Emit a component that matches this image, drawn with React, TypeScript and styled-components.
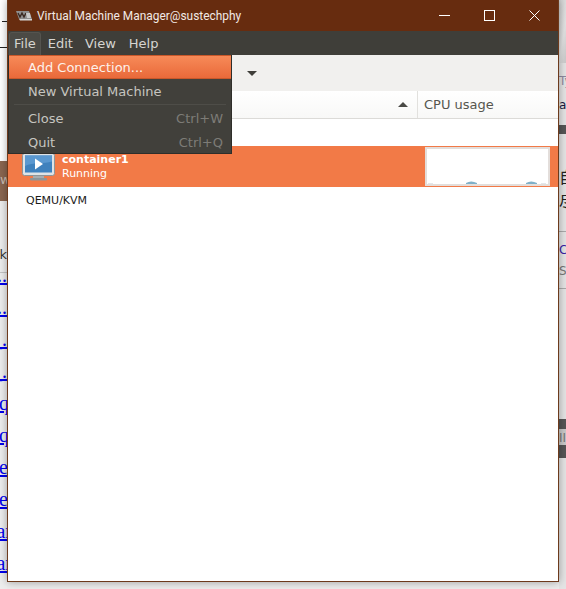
import styled, { createGlobalStyle } from "styled-components";
import { FC } from "react";

const GlobalStyle = createGlobalStyle`
  html, body {
    margin: 0;
    padding: 0;
    background: #ececec;
  }
  * {
    box-sizing: border-box;
  }
`;

const ui = `"DejaVu Sans", sans-serif`;
const pageLinks = [
  { text: "a..", over: 0 },
  { text: "b..", over: 0 },
  { text: "c_.", over: 0 },
  { text: "d_.", over: 0 },
  { text: "xq", over: 2 },
  { text: "xq", over: 2 },
  { text: "xe", over: 1 },
  { text: "xe", over: 1 },
  { text: "xar", over: 5 },
  { text: "xar", over: 5 },
];

const WindowIcon: FC = () => (
  <svg width="16" height="11" viewBox="0 0 16 11">
    <path d="M0 1h13l3 8H3z" fill="#8f8f8f" />
    <path d="M2 3l2 4 2-4 2 4 2-4" fill="none" stroke="#3b2a22" strokeWidth="1.4" />
    <path d="M10 3h4l1 5h-4z" fill="#c9c9c9" />
    <path d="M3 9h13v1.5H4z" fill="#d5d5d5" />
  </svg>
);

const VmIcon: FC = () => (
  <svg width="33" height="28" viewBox="0 0 33 28">
    <rect x="0.5" y="0.5" width="32" height="22" rx="2" fill="#dfe3e6" stroke="#8d9599" />
    <rect x="3" y="2.5" width="27" height="17" fill="#3f81bd" />
    <path d="M3 2.5h27v6C22 11 11 9 3 13z" fill="#5a98d0" />
    <path d="M13 5.5l8 5.5-8 5.5z" fill="#fff" />
    <rect x="11" y="23" width="11" height="2" fill="#a7adb0" />
    <rect x="8" y="25" width="17" height="2.5" rx="1" fill="#8d9599" />
  </svg>
);

const App: FC = () => (
  <>
    <GlobalStyle />
    <Desktop>
      <LeftStrip>
        <Dash $top={21} $width={5} />
        <Dash $top={25} $width={7} />
        <BrownBand>w</BrownBand>
        <FadedText>ak</FadedText>
        <HairLine />
        <LinkList>
          {pageLinks.map((link, i) => (
            <LinkRow key={i}>
              <PageLink $over={link.over}>{link.text}</PageLink>
            </LinkRow>
          ))}
        </LinkList>
      </LeftStrip>

      <Window>
        <TitleBar>
          <WindowIcon />
          <TitleText>Virtual Machine Manager@sustechphy</TitleText>
          <WindowControls>
            <svg width="11" height="11" viewBox="0 0 11 11">
              <path d="M0 5.5h11" stroke="#fff" />
            </svg>
            <svg width="11" height="11" viewBox="0 0 11 11">
              <rect x="0.5" y="0.5" width="10" height="10" fill="none" stroke="#fff" />
            </svg>
            <svg width="11" height="11" viewBox="0 0 11 11">
              <path d="M0.5 0.5l10 10M10.5 0.5l-10 10" stroke="#fff" />
            </svg>
          </WindowControls>
        </TitleBar>

        <MenuBar>
          <MenuTitle $open>File</MenuTitle>
          <MenuTitle>Edit</MenuTitle>
          <MenuTitle>View</MenuTitle>
          <MenuTitle>Help</MenuTitle>
        </MenuBar>

        <Toolbar>
          <DropArrow />
        </Toolbar>

        <TableHeader>
          <NameColumn>
            <SortArrow />
          </NameColumn>
          <CpuColumn>CPU usage</CpuColumn>
        </TableHeader>

        <BlankRow />

        <VmRow>
          <VmIconBox>
            <VmIcon />
          </VmIconBox>
          <VmText>
            <VmName>container1</VmName>
            <VmState>Running</VmState>
          </VmText>
          <CpuGraph>
            <svg width="121" height="35" viewBox="0 0 121 35">
              <path d="M39 35v-1q5-3 11 0v1z" fill="#7fb0c8" />
              <path d="M99 35v-1q5-3 11 0v1z" fill="#7fb0c8" />
              <path d="M1 34.5h5M114 34.5h5" stroke="#e4e8ea" />
            </svg>
          </CpuGraph>
        </VmRow>

        <GroupRow>QEMU/KVM</GroupRow>

        <FileMenu>
          <MenuItem $active>Add Connection...</MenuItem>
          <MenuItem>New Virtual Machine</MenuItem>
          <MenuSeparator />
          <MenuItem>
            Close<Shortcut>Ctrl+W</Shortcut>
          </MenuItem>
          <MenuItem>
            Quit<Shortcut>Ctrl+Q</Shortcut>
          </MenuItem>
        </FileMenu>
      </Window>

      <RightStrip>
        <BlurBand />
        <TyText>Ty</TyText>
        <AgText>ag</AgText>
        <DarkBand />
        <CjkText $top={34}>自</CjkText>
        <CjkText $top={9}>尽</CjkText>
        <SideRule $top={22} />
        <SideLetter $blue>C</SideLetter>
        <SideLetter>S</SideLetter>
        <SideRule $top={7} />
        <PagerBand>II</PagerBand>
      </RightStrip>
    </Desktop>
  </>
);

const Desktop = styled.div`
  display: flex;
  align-items: flex-start;
  width: 566px;
  height: 589px;
  overflow: hidden;
  background: #ececec;
`;

const LeftStrip = styled.div`
  width: 7px;
  height: 589px;
  flex: none;
  overflow: hidden;
  background: linear-gradient(#fff 161px, #ededed 161px);
`;

const Dash = styled.div<{ $top: number; $width: number }>`
  width: ${(p) => p.$width}px;
  height: 1px;
  margin-top: ${(p) => p.$top}px;
  margin-left: auto;
  background: #222;
`;

const BrownBand = styled.div`
  height: 40px;
  margin-top: 113px;
  padding-top: 11px;
  background: #8a6650;
  color: #cbbdb2;
  font: 13px/16px ${ui};
  text-align: right;
`;

const FadedText = styled.div`
  display: flex;
  justify-content: flex-end;
  height: 16px;
  margin-top: 46px;
  color: #333;
  font: 13px/16px ${ui};
`;

const HairLine = styled.div`
  height: 1px;
  margin-top: 9px;
  background: #c4c4c4;
`;

const LinkList = styled.div`
  margin-top: -13px;
`;

const LinkRow = styled.div`
  display: flex;
  justify-content: flex-end;
  height: 32px;
  overflow: hidden;
`;

const PageLink = styled.span<{ $over: number }>`
  flex: none;
  margin-right: ${(p) => -p.$over}px;
  color: #0000ee;
  font: 20px/30px "Liberation Serif", serif;
  text-decoration: underline;
`;

const Window = styled.div`
  position: relative;
  z-index: 1;
  display: flex;
  flex-direction: column;
  width: 552px;
  height: 582px;
  flex: none;
  border: 1px solid #6d3a1c;
  border-top: none;
  background: #fff;
  box-shadow: 0 0 8px rgba(0, 0, 0, 0.35);
`;

const TitleBar = styled.div`
  display: flex;
  align-items: center;
  height: 31px;
  flex: none;
  padding-left: 8px;
  background: #672c0f;
`;

const TitleText = styled.span`
  margin-left: 5px;
  color: #f2e9e4;
  font: 11.9px Roboto, sans-serif;
`;

const WindowControls = styled.div`
  display: flex;
  gap: 34px;
  margin-left: auto;
  padding-right: 18px;
`;

const MenuBar = styled.div`
  display: flex;
  align-items: flex-end;
  height: 24px;
  flex: none;
  padding-left: 1px;
  background: #3f3e39;
`;

const MenuTitle = styled.div<{ $open?: boolean }>`
  height: 23px;
  padding: 0 4px;
  margin-right: 2px;
  border: 1px solid ${(p) => (p.$open ? "#55544f" : "transparent")};
  border-bottom: none;
  border-radius: 3px 3px 0 0;
  background: ${(p) => (p.$open ? "#4b4a45" : "transparent")};
  color: #d6d5d1;
  font: 13px/22px ${ui};

  &:nth-child(3) {
    margin-right: 3px;
  }
`;

const Toolbar = styled.div`
  position: relative;
  display: flex;
  align-items: center;
  height: 36px;
  flex: none;
  padding-left: 239px;
  background: #f1f0ee;
`;

const DropArrow = styled.span`
  width: 0;
  height: 0;
  border-left: 5px solid transparent;
  border-right: 5px solid transparent;
  border-top: 5px solid #3f3e39;
`;

const TableHeader = styled.div`
  display: flex;
  height: 28px;
  flex: none;
  border-bottom: 1px solid #dcdbd8;
  background: linear-gradient(#ffffff, #f8f8f7);
`;

const NameColumn = styled.div`
  display: flex;
  align-items: center;
  justify-content: flex-end;
  width: 410px;
  flex: none;
  padding-right: 9px;
  border-right: 1px solid #e2e1de;
`;

const SortArrow = styled.span`
  width: 0;
  height: 0;
  border-left: 5px solid transparent;
  border-right: 5px solid transparent;
  border-bottom: 5px solid #4a4a46;
`;

const CpuColumn = styled.div`
  padding-left: 6px;
  color: #56564f;
  font: 13px/28px ${ui};
`;

const BlankRow = styled.div`
  height: 27px;
  flex: none;
`;

const VmRow = styled.div`
  display: flex;
  align-items: center;
  height: 41px;
  flex: none;
  background: #f27a47;
`;

const VmIconBox = styled.div`
  display: flex;
  width: 54px;
  flex: none;
  padding-left: 14px;
`;

const VmText = styled.div`
  display: flex;
  flex-direction: column;
  gap: 1px;
  color: #fff;
`;

const VmName = styled.span`
  font: bold 11px/13px ${ui};
`;

const VmState = styled.span`
  font: 11px/13px ${ui};
`;

const CpuGraph = styled.div`
  width: 125px;
  height: 39px;
  margin-left: auto;
  margin-right: 8px;
  border: 2px solid #e3dedb;
  background: #fff;
  line-height: 0;
`;

const GroupRow = styled.div`
  height: 25px;
  flex: none;
  padding-left: 18px;
  color: #1c1c1a;
  font: 11px/27px ${ui};
`;

const FileMenu = styled.div`
  position: absolute;
  top: 55px;
  left: 0;
  z-index: 2;
  width: 224px;
  height: 99px;
  border: 1px solid #2f2e2a;
  border-top: none;
  background: #41403b;
`;

const MenuItem = styled.div<{ $active?: boolean }>`
  display: flex;
  justify-content: space-between;
  height: 24px;
  margin-bottom: ${(p) => (p.$active ? 1 : 0)}px;
  padding: 0 8px 0 19px;
  border: ${(p) => (p.$active ? "1px solid #c9582a" : "none")};
  border-left: none;
  border-right: none;
  background: ${(p) =>
    p.$active ? "linear-gradient(#f78a58, #e9693a)" : "transparent"};
  color: ${(p) => (p.$active ? "#fdf1ea" : "#c6c5c0")};
  font: 13px/${(p) => (p.$active ? 24 : 24)}px ${ui};
`;

const MenuSeparator = styled.div`
  height: 1px;
  margin: 0 5px 2px;
  background: #4e4d48;
`;

const Shortcut = styled.span`
  color: #7d7c77;
`;

const RightStrip = styled.div`
  width: 7px;
  height: 589px;
  flex: none;
  overflow: hidden;
  background: #e4e4e4;
  color: #222;
`;

const BlurBand = styled.div`
  height: 63px;
  background: linear-gradient(100deg, #cfcfcf, #e3e3e3 60%, #c8c8c8);
`;

const TyText = styled.div`
  height: 32px;
  padding-top: 10px;
  color: #8d8aa0;
  font: 12px/16px ${ui};
`;

const AgText = styled.div`
  height: 30px;
  padding-top: 1px;
  color: #1a1a40;
  font: 12px/18px ${ui};
`;

const DarkBand = styled.div`
  height: 9px;
  background: #555;
`;

const CjkText = styled.div<{ $top: number }>`
  height: 16px;
  margin-top: ${(p) => p.$top}px;
  color: #222;
  font: 16px/16px "Noto Sans CJK SC", sans-serif;
`;

const SideRule = styled.div<{ $top: number }>`
  height: 1px;
  margin-top: ${(p) => p.$top}px;
  background: #aaa;
`;

const SideLetter = styled.div<{ $blue?: boolean }>`
  height: 20px;
  margin-top: ${(p) => (p.$blue ? 8 : 1)}px;
  color: ${(p) => (p.$blue ? "#3a1fa8" : "#777")};
  font: 12px/20px ${ui};
`;

const PagerBand = styled.div`
  height: 39px;
  margin-top: 130px;
  background: linear-gradient(#555 10px, #c9c9c9 10px, #c9c9c9 26px, #555 26px);
  color: #777;
  font: 12px/38px ${ui};
`;

export default App;
